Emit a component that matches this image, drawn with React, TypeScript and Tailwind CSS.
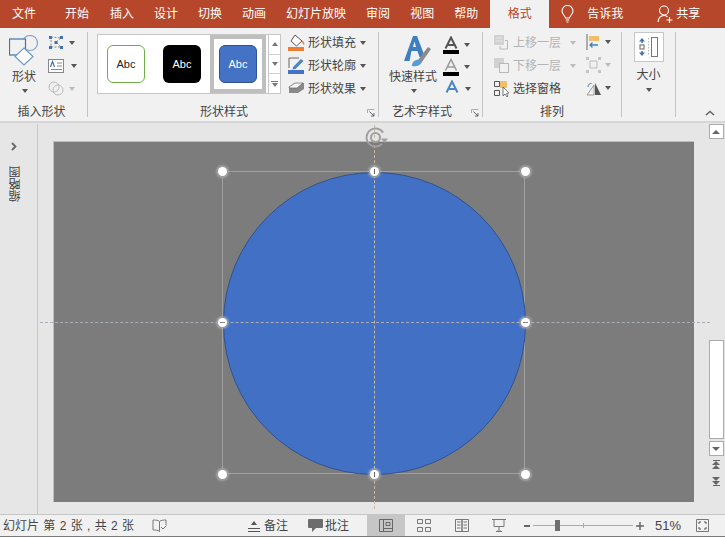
import type { ReactNode } from "react";

function Caret({ light }: { light?: boolean }) {
  return (
    <span
      className={
        light
          ? "block w-0 h-0 border-x-[3.5px] border-x-transparent border-t-[4px] border-t-[#bbb]"
          : "block w-0 h-0 border-x-[3.5px] border-x-transparent border-t-[4px] border-t-[#555]"
      }
    />
  );
}

function Vsep() {
  return <div className="w-px h-[85px] bg-[#c4c4c4] shrink-0" />;
}

function GroupLabel({ children, className }: { children: ReactNode; className?: string }) {
  return (
    <div className={`absolute left-0 right-0 bottom-[-3px] text-center text-[12px] leading-[16px] text-[#444] ${className ?? ""}`}>
      {children}
    </div>
  );
}

function Launcher() {
  return (
    <svg className="absolute bottom-0 right-[3px]" width="8" height="8" viewBox="0 0 8 8" fill="none">
      <path d="M.5 4V.5H7.5" stroke="#aaa" />
      <path d="M2.5 2.5L7 7M7 4V7H4" stroke="#666" />
    </svg>
  );
}

function AbcSwatch({ box }: { box: string }) {
  return (
    <div className={`w-[38px] h-[38px] rounded-[6px] flex items-center justify-center text-[11px] shrink-0 ${box}`}>Abc</div>
  );
}

function FillRow({ icon, label }: { icon: ReactNode; label: string }) {
  return (
    <div className="flex items-center h-[23px] text-[12px] text-[#444]">
      <span className="w-[17px] h-[17px] mr-[3px] shrink-0">{icon}</span>
      <span>{label}</span>
      <span className="ml-[4px]"><Caret /></span>
    </div>
  );
}

function ArrangeRow({ icon, label, off, noCaret }: { icon: ReactNode; label: string; off?: boolean; noCaret?: boolean }) {
  return (
    <div className={`flex items-center h-[23px] text-[12px] ${off ? "text-[#b4b4b4]" : "text-[#444]"}`}>
      <span className="w-[16px] h-[16px] mr-[3px] shrink-0">{icon}</span>
      <span>{label}</span>
      {!noCaret && <span className="ml-[9px]"><Caret light /></span>}
    </div>
  );
}

function LayerIcon({ top }: { top: boolean }) {
  return (
    <svg width="16" height="16" viewBox="0 0 16 16" fill="none">
      {top ? (
        <>
          <rect x="0" y="0" width="10" height="10" fill="#d2d2d2" />
          <path d="M2 3h6M2 6h6" stroke="#e8e8e8" />
          <path d="M11 5.500h2.500V14H6V11" stroke="#b8b8b8" />
        </>
      ) : (
        <>
          <rect x="0" y="0" width="10" height="10" fill="#d2d2d2" />
          <rect x="5.500" y="5.500" width="9" height="9" fill="#f1f1f1" stroke="#b8b8b8" />
        </>
      )}
    </svg>
  );
}

function WordA({ stroke, width, bar }: { stroke: string; width: number; bar?: boolean }) {
  return (
    <svg width="16" height="18" viewBox="0 0 16 18" fill="none">
      <path d="M2.500 12.500L8 1.500 13.500 12.500M4.500 9H11.500" stroke={stroke} strokeWidth={width} />
      {bar && <rect x="0" y="14" width="16" height="4" fill="#000" />}
    </svg>
  );
}

function Handle({ x, y, mark }: { x: number; y: number; mark?: "h" | "v" }) {
  return (
    <div
      className="absolute w-[9px] h-[9px] -ml-[4.500px] -mt-[4.500px] rounded-full bg-white shadow-[0_0_0_1px_#9a9a9a,0_0_3px_1px_#d0d0d0] flex items-center justify-center"
      style={{ left: x, top: y }}
    >
      {mark === "h" && <div className="w-[5px] h-px bg-[#888]" />}
      {mark === "v" && <div className="w-px h-[5px] bg-[#666]" />}
    </div>
  );
}

export default function App() {
  return (
    <div
      className="w-[725px] h-[537px] overflow-hidden flex flex-col bg-[#e6e6e6] text-[#444]"
      style={{ fontFamily: '"Liberation Sans", "Noto Sans CJK SC", sans-serif' }}
    >
      {/* tab strip */}
      <div className="h-[28px] bg-[#b7472a] flex items-center text-[12px] text-white shrink-0">
        <span className="ml-[12px]">文件</span>
        <span className="ml-[29px]">开始</span>
        <span className="ml-[21px]">插入</span>
        <span className="ml-[20px]">设计</span>
        <span className="ml-[20px]">切换</span>
        <span className="ml-[20px]">动画</span>
        <span className="ml-[20px]">幻灯片放映</span>
        <span className="ml-[20px]">审阅</span>
        <span className="ml-[20px]">视图</span>
        <span className="ml-[20px]">帮助</span>
        <span className="ml-[12px] w-[59px] h-[28px] bg-[#f1f1f1] text-[#b7472a] flex items-center justify-center">格式</span>
        <svg className="ml-[12px]" width="13" height="18" viewBox="0 0 13 18" fill="none" stroke="#fff" strokeWidth="1.100">
          <path d="M4.500 13C4.200 10.500 1 9.500 1 6A5.500 5.500 0 0 1 12 6C12 9.500 8.800 10.500 8.500 13ZM4.800 15H8.200M5.500 17H7.500" />
        </svg>
        <span className="ml-[13px]">告诉我</span>
        <svg className="ml-[34px]" width="17" height="18" viewBox="0 0 17 18" fill="none" stroke="#fff" strokeWidth="1.100">
          <circle cx="7" cy="5.500" r="4.500" />
          <path d="M1 17C1.500 12.500 4 10.500 7 10.500C8.500 10.500 9.500 11 10.500 11.800M12.500 12V18M9.500 15H15.500" />
        </svg>
        <span className="ml-[2px]">共享</span>
      </div>

      {/* ribbon */}
      <div className="h-[95px] bg-[#f1f1f1] border-b-2 border-[#d6d6d6] flex items-start pt-[4px] relative shrink-0">
        {/* insert shapes */}
        <div className="relative w-[87px] h-[85px] shrink-0">
          <svg className="absolute left-[9px] top-[3px]" width="30" height="32" viewBox="0 0 30 32" fill="none" strokeWidth="1.200">
            <circle cx="21" cy="8" r="7.500" fill="#f1f1f1" stroke="#7fa4cc" />
            <rect x="0.500" y="4" width="16" height="16" fill="#f1f1f1" stroke="#3f75ae" />
            <path d="M15 13L24 21.500 15 30 6 21.500Z" fill="#fff" stroke="#6e9ac4" />
          </svg>
          <div className="absolute left-[12px] top-[37px] text-[12px] leading-[16px] text-[#444]">形状</div>
          <div className="absolute left-[22px] top-[57px]"><Caret /></div>
          <div className="absolute left-[48px] top-[3px] flex flex-col gap-[8px]">
            <div className="flex items-center gap-[5px] h-[15px]">
              <svg width="16" height="15" viewBox="0 0 16 15" fill="none">
                <path d="M3 2L13 3 8 7 13 12 3 12Z" stroke="#888" strokeDasharray="2 1.500" />
                <path d="M1 1h3v3H1zM12 1h3v3h-3zM6.500 6h3v3h-3zM1 11h3v3H1zM12 11h3v3h-3z" fill="#3f75ae" />
              </svg>
              <Caret />
            </div>
            <div className="flex items-center h-[15px] gap-[7px]">
              <svg width="16" height="14" viewBox="0 0 16 14" fill="none">
                <rect x=".5" y=".5" width="15" height="13" fill="#fff" stroke="#888" />
                <path d="M9 4h5M9 7h5M3 10.500h11" stroke="#888" />
                <path d="M2.500 8L4.500 2.500 6.500 8" stroke="#3f75ae" strokeWidth="1.200" />
              </svg>
              <Caret />
            </div>
            <div className="flex items-center h-[15px] gap-[4px]">
              <svg width="17" height="15" viewBox="0 0 17 15" fill="none" stroke="#bbb">
                <circle cx="6" cy="6" r="5" />
                <circle cx="10" cy="9" r="5" />
              </svg>
              <Caret light />
            </div>
          </div>
          <GroupLabel className="pr-[4px]">插入形状</GroupLabel>
        </div>
        <Vsep />

        {/* shape styles */}
        <div className="relative w-[290px] h-[85px] shrink-0">
          <div className="absolute left-[9px] top-[2px] w-[172px] h-[60px] bg-white border border-[#c6c6c6] flex items-center pl-[9px]">
            <AbcSwatch box="bg-white border border-[#70ad47] text-[#222]" />
            <div className="ml-[18px]">
              <AbcSwatch box="bg-black text-white" />
            </div>
            <div className="ml-[9px] w-[56px] h-[58px] border-[4px] border-[#bfbfbf] flex items-center justify-center">
              <AbcSwatch box="bg-[#4472c4] border border-[#2f528f] text-white" />
            </div>
          </div>
          <div className="absolute left-[180px] top-[2px] w-[13px] h-[60px] bg-white border border-[#c6c6c6] flex flex-col">
            <div className="flex-1 border-b border-[#d0d0d0] flex items-center justify-center">
              <div className="w-0 h-0 border-x-[3px] border-x-transparent border-b-[4px] border-b-[#777]" />
            </div>
            <div className="flex-1 border-b border-[#d0d0d0] flex items-center justify-center">
              <div className="w-0 h-0 border-x-[3px] border-x-transparent border-t-[4px] border-t-[#777]" />
            </div>
            <div className="flex-1 flex flex-col items-center justify-center gap-[1px]">
              <div className="w-[7px] h-px bg-[#777]" />
              <div className="w-0 h-0 border-x-[3px] border-x-transparent border-t-[4px] border-t-[#777]" />
            </div>
          </div>
          <div className="absolute left-[200px] top-[-1px] flex flex-col">
            <FillRow
              label="形状填充"
              icon={
                <svg width="17" height="17" viewBox="0 0 17 17" fill="none">
                  <path d="M7 1L14 7 8.500 12 3 7Z" fill="#fff" stroke="#555" />
                  <path d="M14 7C15.500 8.500 16 9.500 15.500 10.500" stroke="#ed7d31" strokeWidth="1.500" />
                  <rect x="0" y="13" width="16" height="4" fill="#ed7d31" />
                </svg>
              }
            />
            <FillRow
              label="形状轮廓"
              icon={
                <svg width="17" height="17" viewBox="0 0 17 17" fill="none">
                  <path d="M1 11V1H11" stroke="#666" />
                  <path d="M5 10L13 2 15.500 4 7.500 12 4.500 12.500Z" fill="#4a86c5" />
                  <rect x="0" y="13" width="16" height="4" fill="#4472c4" />
                </svg>
              }
            />
            <FillRow
              label="形状效果"
              icon={
                <svg width="17" height="17" viewBox="0 0 17 17" fill="none">
                  <path d="M1 7L7 3H16V9L10 13H1Z" fill="#8a8a8a" />
                  <path d="M1 7L7 3H15L9 8H1Z" fill="#f5f5f5" stroke="#666" strokeWidth=".7" />
                </svg>
              }
            />
          </div>
          <GroupLabel className="pr-[18px]">形状样式</GroupLabel>
          <Launcher />
        </div>
        <Vsep />

        {/* word art */}
        <div className="relative w-[103px] h-[85px] shrink-0">
          <svg className="absolute left-[23px] top-[3px]" width="30" height="32" viewBox="0 0 30 32" fill="none">
            <path d="M2 26L11 1H15L23 22H17.500L15.500 16H9.500L7.500 26ZM11 12H14L12.500 6.500Z" fill="#3f7fc0" />
            <path d="M16 25L26 12 29 14 20 27Z" fill="#8a8a8a" />
            <path d="M10 31C10 26 14 24 18 25L20 27C18 31 14 32 10 31Z" fill="#5b9bd5" />
          </svg>
          <div className="absolute left-[10px] top-[37px] text-[12px] leading-[16px] whitespace-nowrap">快速样式</div>
          <div className="absolute left-[32px] top-[57px]"><Caret /></div>
          <div className="absolute left-[64px] top-[4px] flex flex-col gap-[4px]">
            <div className="flex items-center gap-[5px]">
              <WordA stroke="#555" width={2} bar />
              <Caret />
            </div>
            <div className="flex items-center gap-[5px]">
              <WordA stroke="#9a9a9a" width={1.600} bar />
              <Caret />
            </div>
            <div className="flex items-center gap-[5px] ml-[1px]">
              <WordA stroke="#4a86c5" width={2} />
              <Caret />
            </div>
          </div>
          <GroupLabel className="pr-[17px]">艺术字样式</GroupLabel>
          <Launcher />
        </div>
        <Vsep />

        {/* arrange */}
        <div className="relative w-[138px] h-[85px] shrink-0">
          <div className="absolute left-[11px] top-[-1px] flex flex-col">
            <ArrangeRow label="上移一层" off icon={<LayerIcon top />} />
            <ArrangeRow label="下移一层" off icon={<LayerIcon top={false} />} />
            <ArrangeRow
              label="选择窗格"
              noCaret
              icon={
                <svg width="16" height="16" viewBox="0 0 16 16" fill="none">
                  <rect x="6" y="0" width="7" height="7" fill="#f0bf6a" />
                  <path d="M.5.5h5v5h-5zM.5 9.500h5v5h-5z" stroke="#555" />
                  <path d="M9 6L9 15 11 13 13 16 14 15 12.500 12.500 15 12Z" fill="#fff" stroke="#555" strokeWidth=".8" />
                </svg>
              }
            />
          </div>
          <div className="absolute left-[103px] top-[2px] flex flex-col gap-[7px]">
            <div className="flex items-center gap-[4px] h-[16px]">
              <svg width="15" height="16" viewBox="0 0 15 16" fill="none">
                <path d="M1 0V16" stroke="#666" />
                <rect x="3" y="2" width="10" height="5" fill="#f0bf6a" />
                <path d="M12 11H4M6.500 8.500L4 11 6.500 13.500" stroke="#3f7fc0" strokeWidth="1.300" />
              </svg>
              <Caret />
            </div>
            <div className="flex items-center gap-[4px] h-[16px]">
              <svg width="15" height="16" viewBox="0 0 15 16" fill="none">
                <path d="M4 4h7v7H4z" stroke="#bbb" />
                <path d="M0 0h3v3H0zM12 0h3v3h-3zM0 13h3v3H0zM12 13h3v3h-3z" fill="#c4c4c4" />
              </svg>
              <Caret light />
            </div>
            <div className="flex items-center gap-[4px] h-[16px]">
              <svg width="15" height="16" viewBox="0 0 15 16" fill="none">
                <path d="M8 5V15H1Z" stroke="#999" />
                <path d="M9 3L15 15H9Z" fill="#555" />
                <path d="M2 7C2 4.500 3.500 3.500 5.500 3.500" stroke="#3f7fc0" />
              </svg>
              <Caret />
            </div>
          </div>
          <GroupLabel>排列</GroupLabel>
        </div>
        <Vsep />

        {/* size */}
        <div className="relative w-[53px] h-[85px] shrink-0 flex flex-col items-center">
          <div className="w-[30px] h-[30px] bg-white border border-[#c6c6c6] flex items-center justify-center">
            <svg width="20" height="20" viewBox="0 0 20 20" fill="none">
              <path d="M3 1L6 4.500H0ZM3 19L0 15.500H6Z" fill="#3f75ae" />
              <path d="M3 4V6M3 14V16" stroke="#3f75ae" strokeWidth="1.500" />
              <rect x="1" y="8" width="4" height="4" stroke="#666" />
              <rect x="12.500" y=".5" width="6" height="19" stroke="#777" />
              <path d="M9.500 1V19" stroke="#bbb" strokeDasharray="1.500 1.500" />
            </svg>
          </div>
          <div className="mt-[5px] text-[12px] leading-[16px]">大小</div>
          <div className="mt-[5px]"><Caret /></div>
        </div>
        <Vsep />

        <svg className="absolute right-[10px] bottom-[5px]" width="10" height="6" viewBox="0 0 10 6" fill="none" stroke="#666" strokeWidth="1.600">
          <path d="M1 5L5 1.500 9 5" />
        </svg>
      </div>

      {/* work area */}
      <div className="flex-1 flex min-h-0">
        <div className="w-[38px] shrink-0 pt-[1px] h-full">
          <div className="h-full border-r border-[#c6c6c6] flex flex-col items-center pr-[9px]">
            <svg className="mt-[18px]" width="6" height="9" viewBox="0 0 6 9" fill="none" stroke="#666" strokeWidth="1.800">
              <path d="M1 1L4.500 4.500 1 8" />
            </svg>
            <div className="mt-[15px] ml-[3px] rotate-180 [writing-mode:vertical-rl] text-[12px] leading-[14px] text-[#444]">缩略图</div>
          </div>
        </div>

        <div className="flex-1 pl-[15px] pt-[18px]">
          <div className="relative w-[641px] h-[361px] bg-[#7c7c7c] border-t border-l border-[#bdbdbd]">
            <div className="absolute left-[168px] top-[29px] w-[303px] h-[303px] border border-[#a0a0a0]" />
            <div className="absolute left-[169px] top-[30px] w-[303px] h-[303px] rounded-full bg-[#4270c4] border border-[#2f528f]" />
            <div className="absolute left-[-14px] right-[-16px] top-[180px] border-t border-dashed border-[#a8adb8]" />
            <div className="absolute top-[-17px] bottom-[-7px] left-[320px] border-l border-dashed border-[#c2b99f]" />
            <svg className="absolute left-[310px] top-[-16px]" width="24" height="24" viewBox="0 0 24 24" fill="none" stroke="#a0a0a0" strokeWidth="2">
              <circle cx="11.500" cy="11.500" r="9" strokeDasharray="44 12" strokeDashoffset="-7" />
              <circle cx="11.500" cy="11.500" r="4.500" />
              <path d="M17 12.500H24L20.500 17Z" fill="#a0a0a0" stroke="none" />
            </svg>
            <Handle x={168} y={29} />
            <Handle x={320.500} y={29} mark="v" />
            <Handle x={471} y={29} />
            <Handle x={168} y={180.500} mark="h" />
            <Handle x={471} y={180.500} mark="h" />
            <Handle x={168} y={332} />
            <Handle x={320.500} y={332} mark="v" />
            <Handle x={471} y={332} />
          </div>
        </div>

        {/* right scrollbar */}
        <div className="w-[16px] shrink-0 mr-[1px] flex flex-col items-center pt-[1px] h-full">
          <div className="w-[15px] h-[15px] bg-white border border-[#ababab] flex items-center justify-center">
            <div className="w-0 h-0 border-x-[4px] border-x-transparent border-b-[4px] border-b-[#666]" />
          </div>
          <div className="mt-[201px] w-[15px] h-[99px] bg-white border border-[#ababab]" />
          <div className="mt-[2px] w-[15px] h-[15px] bg-white border border-[#ababab] flex items-center justify-center">
            <div className="w-0 h-0 border-x-[4px] border-x-transparent border-t-[4px] border-t-[#666]" />
          </div>
          <div className="mt-[4px] flex flex-col items-center">
            <div className="w-[7px] h-px bg-[#666]" />
            <div className="w-0 h-0 border-x-[4px] border-x-transparent border-b-[4px] border-b-[#666]" />
            <div className="w-0 h-0 border-x-[4px] border-x-transparent border-b-[4px] border-b-[#666]" />
          </div>
          <div className="mt-[8px] flex flex-col items-center">
            <div className="w-0 h-0 border-x-[4px] border-x-transparent border-t-[4px] border-t-[#666]" />
            <div className="w-0 h-0 border-x-[4px] border-x-transparent border-t-[4px] border-t-[#666]" />
            <div className="w-[7px] h-px bg-[#666]" />
          </div>
        </div>
      </div>

      {/* status bar */}
      <div className="h-[23px] shrink-0 bg-[#f1f1f1] border-t border-[#c6c6c6] border-b border-b-[#7a7a7a] flex items-center text-[12px] text-[#444]">
        <span className="ml-[3px] w-[130px] whitespace-nowrap [word-spacing:1px]">幻灯片 第 2 张 , 共 2 张</span>
        <svg className="ml-[19px]" width="15" height="13" viewBox="0 0 15 13" fill="none" stroke="#777">
          <path d="M7.500 2.500C6 1 3 1 1 1V11C3 11 6 11 7.500 12.500V2.500ZM7.500 2.500C9 1 12 1 14 1V6M9 8L11 10 14.500 6.500" />
        </svg>
        <svg className="ml-[81px]" width="12" height="12" viewBox="0 0 12 12" fill="none" stroke="#555">
          <path d="M0 8.500H12M0 11.500H12" />
          <path d="M6 1L9 5H3Z" fill="#555" stroke="none" />
        </svg>
        <span className="ml-[4px]">备注</span>
        <svg className="ml-[20px]" width="15" height="14" viewBox="0 0 15 14">
          <path d="M1 0H14A1 1 0 0 1 15 1V8A1 1 0 0 1 14 9H8L4 13V9H1A1 1 0 0 1 0 8V1A1 1 0 0 1 1 0Z" fill="#6d6d6d" />
        </svg>
        <span className="ml-[2px]">批注</span>
        <div className="ml-[18px] w-[38px] h-full bg-[#c6c6c6] flex items-center justify-center">
          <svg width="14" height="13" viewBox="0 0 14 13" fill="none" stroke="#666">
            <path d="M.5.5h13v12H.5zM4.500.5v12M7 3.500h4v3H7zM4.500 9.500h9" />
          </svg>
        </div>
        <div className="w-[38px] flex justify-center">
          <svg width="14" height="13" viewBox="0 0 14 13" fill="none" stroke="#777">
            <path d="M.5.5h5v4h-5zM8.500.5h5v4h-5zM.5 8.500h5v4h-5zM8.500 8.500h5v4h-5z" />
          </svg>
        </div>
        <div className="w-[37px] flex justify-center">
          <svg width="14" height="13" viewBox="0 0 14 13" fill="none" stroke="#777">
            <path d="M.5.5H7V12.500H.5zM7 .5H13.500V12.500H7zM2 3h3.500M2 6h3.500M2 9h3.500M8.500 3H12M8.500 6H12M8.500 9H12" />
          </svg>
        </div>
        <div className="w-[38px] flex justify-center">
          <svg width="14" height="13" viewBox="0 0 14 13" fill="none" stroke="#777">
            <path d="M0 .5H14M2 .5V7.500H12V.5M7 7.500V10.500M4 12.500H10M7 10.500L5 12.500M7 10.500L9 12.500" />
          </svg>
        </div>
        <div className="ml-[6px] w-[6px] h-[2px] bg-[#666]" />
        <div className="relative ml-[3px] w-[100px] h-px bg-[#aaa]">
          <div className="absolute left-[22px] top-[-5px] w-[5px] h-[11px] bg-[#6f6f6f]" />
          <div className="absolute left-[50px] top-[-2px] w-px h-[5px] bg-[#aaa]" />
        </div>
        <svg className="ml-[3px]" width="8" height="8" viewBox="0 0 8 8" stroke="#666" strokeWidth="1.500">
          <path d="M0 4H8M4 0V8" />
        </svg>
        <span className="ml-[11px] text-[13px]">51%</span>
        <svg className="ml-[15px]" width="13" height="13" viewBox="0 0 13 13" fill="none" stroke="#777">
          <path d="M.5.5h12v12H.5z" />
          <path d="M3 5V3H5M8 3H10V5M3 8V10H5M8 10H10V8" stroke="#555" />
        </svg>
      </div>
    </div>
  );
}
